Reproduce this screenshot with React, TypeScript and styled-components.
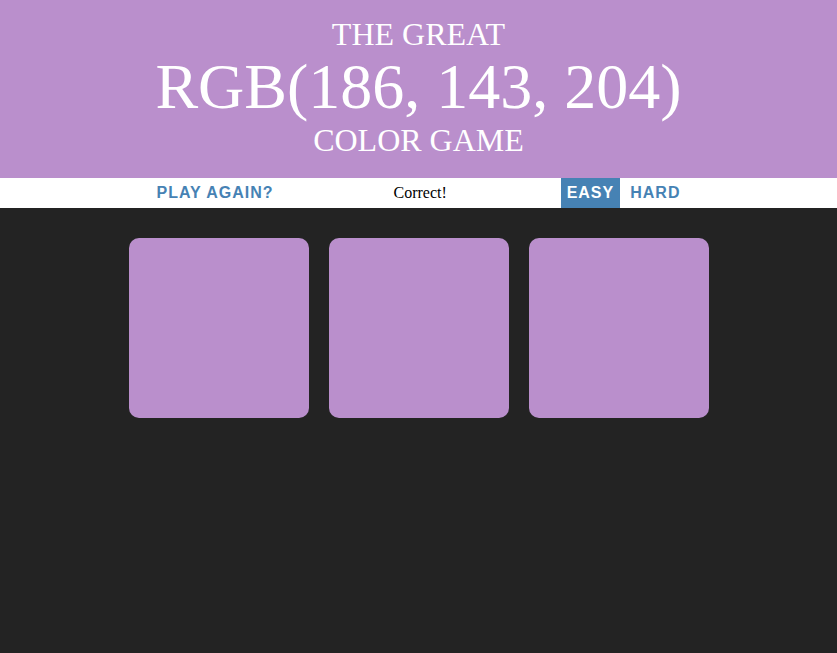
import React, { useState } from "react";
import styled, { createGlobalStyle } from "styled-components";

const Global = createGlobalStyle`
  body {
    background-color: #232323;
    margin: 0;
    font-family: "Liberation Serif", "Times New Roman", serif;
  }
`;

const Title = styled.h1`
  text-align: center;
  font-weight: normal;
  font-size: 32px;
  color: white;
  margin: 0;
  padding: 17px 0 20px;
  text-transform: uppercase;
`;

const TitleLine = styled.span`
  display: block;
  line-height: 35px;
`;

const ColorDisplay = styled.span`
  display: block;
  font-size: 64px;
  line-height: 70.6px;
`;

const Stripe = styled.div`
  background: white;
  height: 30px;
  text-align: center;
  color: black;
  font-size: 16px;
`;

const Button = styled.button<{ $selected?: boolean }>`
  border: none;
  background: ${(p) => (p.$selected ? "steelblue" : "none")};
  color: ${(p) => (p.$selected ? "white" : "steelblue")};
  text-transform: uppercase;
  height: 100%;
  font-weight: 700;
  letter-spacing: 1px;
  font-size: inherit;
  font-family: "Liberation Sans", Arial, sans-serif;
  padding: 1px 6px;
  outline: none;
  cursor: pointer;
`;

const Message = styled.span`
  display: inline-block;
  width: 273px;
`;

const Container = styled.div`
  margin: 20px auto;
  max-width: 600px;
  padding-left: 1px;
  &::after {
    content: "";
    display: block;
    clear: both;
  }
`;

const Square = styled.div<{ $color: string }>`
  width: 30%;
  padding-bottom: 30%;
  float: left;
  margin: 1.66%;
  border-radius: 10px;
  background: ${(p) => p.$color};
`;

export default function App() {
  const color = "rgb(186, 143, 204)";
  const [mode, setMode] = useState<"easy" | "hard">("easy");
  const count = mode === "easy" ? 3 : 6;
  return (
    <>
      <Global />
      <Title style={{ background: color }}>
        <TitleLine>The Great</TitleLine>
        <ColorDisplay>{color}</ColorDisplay>
        <TitleLine>Color Game</TitleLine>
      </Title>
      <Stripe>
        <Button>Play Again?</Button> <Message>Correct!</Message>{" "}
        <Button $selected={mode === "easy"} onClick={() => setMode("easy")}>
          Easy
        </Button>{" "}
        <Button $selected={mode === "hard"} onClick={() => setMode("hard")}>
          Hard
        </Button>
      </Stripe>
      <Container>
        {Array.from({ length: count }).map((_, i) => (
          <Square key={i} $color={color} />
        ))}
      </Container>
    </>
  );
}
